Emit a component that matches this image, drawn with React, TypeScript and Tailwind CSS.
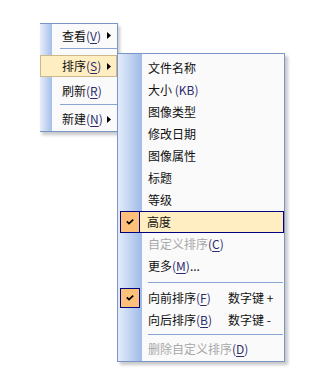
import React from 'react'

const NAVY = 'border-[#000080]'

function Mn({ text, k, tail = '' }: { text: string; k: string; tail?: string }) {
  return (
    <span>
      {text}
      <span className="text-[#2c2c6e]">
        (<u className="underline-offset-[2px]">{k}</u>)
      </span>
      {tail}
    </span>
  )
}

function Arrow() {
  return (
    <svg width="4" height="7" viewBox="0 0 4 7" className="ml-auto mr-[6px]">
      <path d="M0 0 L4 3.5 L0 7 Z" fill="#000" />
    </svg>
  )
}

function Check() {
  return (
    <svg width="8" height="6" viewBox="0 0 8 6">
      <polyline points="0.8,2.4 3,4.6 7.2,0.6" fill="none" stroke="#000" strokeWidth="1.7" />
    </svg>
  )
}

function Box({ full }: { full?: boolean }) {
  return (
    <div
      className={`w-[20px] ${full ? 'h-full' : 'h-[20px]'} shrink-0 flex items-center justify-center border ${NAVY} bg-[#ffc07a]`}
    >
      <Check />
    </div>
  )
}

type Item = {
  label: React.ReactNode
  shortcut?: string
  checked?: boolean
  active?: boolean
  disabled?: boolean
}

function SubRow({ label, shortcut, checked, active, disabled }: Item) {
  const color = disabled ? 'text-[#a8a8a8]' : 'text-[#111]'
  const content = (
    <>
      <span className={shortcut ? 'w-[80px] shrink-0' : ''}>{label}</span>
      {shortcut && <span>{shortcut}</span>}
    </>
  )
  if (active) {
    return (
      <div className={`flex h-[22px] ml-[2px] ${color}`}>
        <Box full />
        <div className={`flex-1 flex items-center pl-[7px] border-y border-r ${NAVY} bg-[#ffeec2]`}>{content}</div>
      </div>
    )
  }
  return (
    <div className={`flex h-[22px] items-center ${color}`}>
      <div className="w-[30px] shrink-0 flex items-center pl-[2px]">{checked && <Box />}</div>
      {content}
    </div>
  )
}

function SubSep({ h }: { h: string }) {
  return (
    <div className={`${h} flex items-center pl-[30px] pr-[1px]`}>
      <div className="h-px w-full bg-[#8aa5d4]" />
    </div>
  )
}

export default function App() {
  const sortItems: Item[] = [
    { label: '文件名称' },
    { label: <span>大小 <span className="text-[#2c2c6e]">(KB)</span></span> },
    { label: '图像类型' },
    { label: '修改日期' },
    { label: '图像属性' },
    { label: '标题' },
    { label: '等级' },
    { label: '高度', active: true },
    { label: <Mn text="自定义排序" k="C" />, disabled: true },
    { label: <Mn text="更多" k="M" tail="..." /> },
  ]

  return (
    <div className="relative w-[310px] h-[373px] bg-white overflow-hidden font-['Noto_Sans_CJK_SC',sans-serif] text-[12px] leading-none">
      {/* main context menu */}
      <div className="absolute left-[40px] top-[23px] w-[78px] border-y border-r border-[#7a96c6] pb-[1px] bg-[linear-gradient(to_right,#e6eefa_0px,#a5bee9_12px,#fafafa_12px)] shadow-[2px_3px_3px_rgba(0,0,0,0.22)] text-[#111]">
        <div className="flex items-center h-[23px] pl-[22px]">
          <Mn text="查看" k="V" />
          <Arrow />
        </div>
        <div className="h-[8px] pl-[20px] pt-[1px]">
          <div className="h-px bg-[#8aa5d4]" />
        </div>
        <div className="flex items-center h-[22px] pl-[21px] border border-[#cdb88e] bg-[#ffeec2]">
          <Mn text="排序" k="S" />
          <svg width="4" height="7" viewBox="0 0 4 7" className="ml-auto mr-[5px]">
            <path d="M0 0 L4 3.5 L0 7 Z" fill="#000" />
          </svg>
        </div>
        <div className="flex items-center h-[22px] mt-[3px] pl-[22px]">
          <Mn text="刷新" k="R" />
        </div>
        <div className="h-[6px] pl-[20px] pt-[2px]">
          <div className="h-px bg-[#8aa5d4]" />
        </div>
        <div className="flex items-center h-[22px] pl-[22px]">
          <Mn text="新建" k="N" />
          <Arrow />
        </div>
      </div>

      {/* sort submenu */}
      <div className="absolute left-[117px] top-[53px] w-[168px] border border-[#7a96c6] pt-[3px] pb-[1px] bg-[linear-gradient(to_right,#e4ecfa_0px,#9fbbe8_24px,#fafafa_24px)] shadow-[3px_3px_3px_rgba(0,0,0,0.22)]">
        {sortItems.map((it, i) => (
          <SubRow key={i} {...it} />
        ))}
        <SubSep h="h-[10px]" />
        <SubRow label={<Mn text="向前排序" k="F" />} shortcut="数字键 +" checked />
        <SubRow label={<Mn text="向后排序" k="B" />} shortcut="数字键 -" />
        <SubSep h="h-[7px]" />
        <SubRow label={<Mn text="删除自定义排序" k="D" />} disabled />
      </div>
    </div>
  )
}
